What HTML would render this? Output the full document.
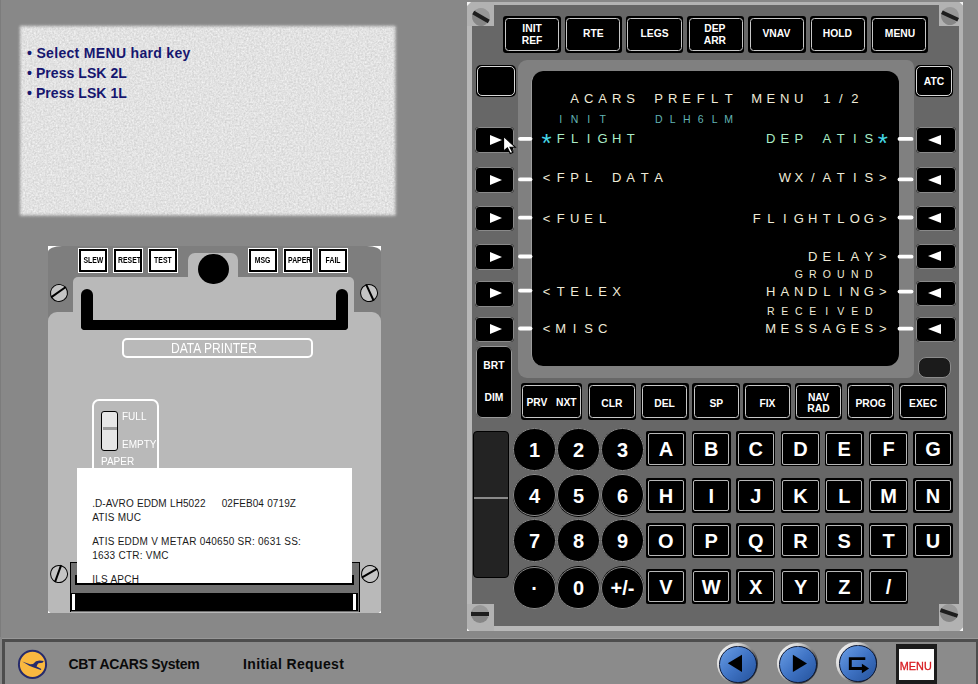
<!DOCTYPE html>
<html><head><meta charset="utf-8"><title>CBT ACARS System</title>
<style>
html,body{margin:0;padding:0}
body{width:978px;height:684px;overflow:hidden;background:#888;font-family:"Liberation Sans",Arial,sans-serif;position:relative}
#root{position:absolute;left:0;top:0;width:978px;height:684px;overflow:hidden;background:#888}
#root div,#root i,#root svg{position:absolute;box-sizing:border-box}
.panel{left:22px;top:28px;width:371.5px;height:185.5px}
.panel p{position:absolute;margin:0;left:5px;font-weight:bold;font-size:14px;color:#16166f;white-space:nowrap;letter-spacing:.32px}
/* CDU */
.cdu{left:467px;top:2px;width:496px;height:629px;background:#b4b4b4}
.cdu-in{left:472px;top:5px;width:487px;height:621px;background:#676767}
.corner{width:27px;height:24px;background:#b2b2b2}
.screw{width:18px;height:18px;border-radius:50%;background:linear-gradient(200deg,#989898 50%,#868686 50%)}
.screw:after{content:"";position:absolute;left:0px;top:7.2px;width:18px;height:3.6px;background:#1e1e1e}
.bezel{left:518px;top:60px;width:395.8px;height:317.5px;background:#808080;border-radius:9px 7px 7px 9px}
.scr{left:530.7px;top:70.7px;width:368.8px;height:295px;background:#000;border-radius:12px;border-left:1px solid #9c9c9c}
.key{background:#000;border-radius:3px;color:#fff;font-weight:bold;font-size:10.3px;line-height:11.7px;text-align:center}
.key:before{content:"";position:absolute;left:1.6px;top:1.6px;right:1.6px;bottom:1.6px;border:1px solid #c8c8c8;border-radius:3.5px}
.key.dim:before{border-color:#9a9a9a;border-radius:6px;left:0;top:0;right:0;bottom:0}
.key.f span{margin-top:3px}
.key.sq{border-radius:5px}
.key.sq:before{left:1px;top:1px;right:1px;bottom:1px;border-radius:5px;border-color:#d8d8d8}
.key.sq span{margin-top:1px}
.key.t span{margin-top:-.4px}
.key span{position:absolute;left:0;right:0;top:50%;transform:translateY(-50%)}
.lsk{background:#000;border-radius:4px}
.lsk:before{content:"";position:absolute;left:0;top:0;right:0;bottom:0;border:.9px solid #8a8a8a;border-radius:4px}
.tr{left:14.6px;top:50%;margin-top:-5.2px;width:0;height:0;border-left:12.5px solid #fff;border-top:5.3px solid transparent;border-bottom:5.3px solid transparent}
.tl{left:11.9px;top:50%;margin-top:-5.2px;width:0;height:0;border-right:13.4px solid #fff;border-top:5.3px solid transparent;border-bottom:5.3px solid transparent}
.num{width:43px;height:43px;border-radius:50%;background:#000;color:#fff;font-weight:bold;font-size:20px;text-align:center;line-height:44px}
.num:before{content:"";position:absolute;left:.3px;top:.3px;right:.3px;bottom:.3px;border:.9px solid #8a8a8a;border-radius:50%}
.num span{position:relative}
.let{width:39.4px;height:34.8px;background:#000;color:#fff;font-weight:bold;font-size:20px;text-align:center;line-height:37.3px;border-radius:2px}
.let:before{content:"";position:absolute;left:1.5px;top:1.5px;right:1.5px;bottom:1.5px;border:1px solid #b8b8b8;border-radius:2px}
.let span{position:relative}
/* printer */
.prn{left:48px;top:246px;width:333px;height:367px;background:#fff}
.prn-d{left:0;top:0;width:333px;height:367px;background:#7e7e7e;border-radius:14px 14px 5px 5px/6px 6px 4px 4px}
.lg{background:#b9b9b9}
.pb{width:30px;height:24.5px;background:#fff;border:1.5px solid #fff;color:#000;font-weight:bold;font-size:9.3px;line-height:23.5px;text-align:center}
.pb:before{content:"";position:absolute;left:0;top:0;right:0;bottom:0;border:2px solid #000}
.pb span{position:relative;display:inline-block;transform:scaleX(.74)}
.pscrew{width:18px;height:18px;border-radius:50%;border:1.9px solid #000;background:#c4c4c4}
.pscrew:after{content:"";position:absolute;left:-1.5px;top:5.7px;width:18px;height:2.8px;background:#000}
/* bar */
.bar{left:2px;top:638.5px;width:977px;height:60px;border:3.2px solid #4d4d4d;background:#8b8b8b}
.bt{font-weight:bold;font-size:14px;line-height:16px;color:#0a0a0a;white-space:nowrap;top:655.6px}
.nav{width:41px;height:41px;border-radius:50%;top:643px;background:linear-gradient(125deg,#f4f4f4 10%,#cfcfcf 35%,#8a8a8a 55%,#3a3a3a 78%,#2a2a2a 100%)}
.nav:before{content:"";position:absolute;left:2.8px;top:2.8px;width:35.4px;height:35.4px;border-radius:50%;border:1px solid #0b1836;background:linear-gradient(135deg,#6296df 10%,#3f73c4 50%,#27559f 95%)}
.gl{color:#fff;font-size:11.5px;line-height:12.6px;white-space:nowrap;transform:scaleX(.87);transform-origin:0 0}
.paper p{position:absolute;margin:0;left:15.2px;font-size:10px;line-height:11px;color:#1a1a1a;white-space:nowrap;letter-spacing:.25px}
</style></head><body><div id="root">

<svg style="left:8px;top:14px" width="400" height="214" viewBox="8 14 400 214">
<filter id="tx" x="-5%" y="-8%" width="110%" height="116%" color-interpolation-filters="sRGB">
<feGaussianBlur in="SourceAlpha" stdDeviation="1.7" result="m"/>
<feTurbulence type="fractalNoise" baseFrequency="0.55" numOctaves="2" seed="4" result="n"/>
<feColorMatrix in="n" type="matrix" values="0.2 0 0 0 0.785  0.2 0 0 0 0.785  0.2 0 0 0 0.785  0 0 0 0 1" result="g"/>
<feComposite in="g" in2="m" operator="in"/>
</filter>
<rect x="20" y="26" width="375.5" height="189.5" fill="#e1e1e1" filter="url(#tx)"/>
</svg>
<div style="left:0;top:0;width:1px;height:637px;background:#7c7c7c"></div>
<div class="panel">
<p style="top:17px">• Select MENU hard key</p>
<p style="top:37px;letter-spacing:.06px">• Press LSK 2L</p>
<p style="top:57px;letter-spacing:.06px">• Press LSK 1L</p>
</div>

<!-- printer -->
<div class="prn"><div class="prn-d"></div>
<div class="lg" style="left:25px;top:31px;width:281px;height:40px;border-radius:5px 5px 0 0"></div>
<div class="lg" style="left:0;top:66px;width:333px;height:301px;border-radius:9px 9px 4px 4px"></div>
<div class="lg" style="left:140px;top:6.5px;width:50px;height:30px;border-radius:7px 7px 0 0"></div>
<div style="left:150px;top:7.5px;width:30.6px;height:30.6px;border-radius:50%;background:#000"></div>
<div class="pb" style="left:30px;top:2.4px"><span>SLEW</span></div>
<div class="pb" style="left:65px;top:2.4px"><span>RESET</span></div>
<div class="pb" style="left:100px;top:2.4px"><span>TEST</span></div>
<div class="pb" style="left:200px;top:2.4px"><span>MSG</span></div>
<div class="pb" style="left:235px;top:2.4px"><span>PAPER</span></div>
<div class="pb" style="left:270px;top:2.4px"><span>FAIL</span></div>
<div class="pscrew" style="left:2px;top:38.3px;transform:rotate(-35deg)"></div>
<div class="pscrew" style="left:312.3px;top:38.3px;transform:rotate(65deg)"></div>
<div class="pscrew" style="left:2px;top:319.2px;transform:rotate(-70deg)"></div>
<div class="pscrew" style="left:313px;top:319.2px;transform:rotate(-30deg)"></div>
<!-- handle -->
<div style="left:33px;top:49px;width:267px;height:34.6px;border:12.2px solid #000;border-bottom-width:10.7px;border-top:none;border-radius:0 0 4px 4px"></div>
<div style="left:33px;top:43.2px;width:12.2px;height:12px;background:#000;border-radius:6px 6px 0 0"></div>
<div style="left:287.8px;top:43.2px;width:12.2px;height:12px;background:#000;border-radius:6px 6px 0 0"></div>
<div style="left:74px;top:92.4px;width:191px;height:20px;border:2px solid #fff;border-radius:5px;color:#fff;font-size:14px;line-height:16px;text-align:center"><span style="display:inline-block;transform:scaleX(.86);position:relative;left:-3.5px">DATA PRINTER</span></div>
<!-- paper gauge -->
<div style="left:44.2px;top:152.6px;width:67px;height:80px;border:2px solid #fff;border-radius:7px"></div>
<div style="left:53px;top:165px;width:17.2px;height:39.5px;border:1.3px solid #000;border-right-width:1.9px;border-bottom-width:1.9px;border-radius:3px;background:#e6e6e6"></div>
<div style="left:54.5px;top:180.8px;width:14.5px;height:2.8px;background:#9c9c9c"></div>
<div class="gl" style="left:73.5px;top:164px">FULL</div>
<div class="gl" style="left:73.5px;top:192.3px">EMPTY</div>
<div class="gl" style="left:53px;top:209px">PAPER</div>
<!-- slot -->
<div style="left:21.5px;top:316px;width:290px;height:50px;background:#707070;border:1.4px solid #000;border-bottom:none"></div>
<div style="left:23px;top:347px;width:287px;height:18.4px;background:#000"></div>
<div style="left:24.2px;top:348px;width:2.8px;height:16px;background:#fff"></div>
<div style="left:305.2px;top:348px;width:2.8px;height:16px;background:#fff"></div>
<div style="left:27px;top:329px;width:279px;height:10px;border:2px solid #000;border-top:none"></div>
<div class="paper" style="left:29px;top:222px;width:275px;height:115px;background:#fff;overflow:hidden">
<p style="top:30.3px;letter-spacing:.09px;word-spacing:.35px">.D-AVRO EDDM LH5022&nbsp; &nbsp; &nbsp;02FEB04 0719Z</p>
<p style="top:43.9px">ATIS MUC</p>
<p style="top:67.7px">ATIS EDDM V METAR 040650 SR: 0631 SS:</p>
<p style="top:81.7px">1633 CTR: VMC</p>
<p style="top:105.8px">ILS APCH</p>
</div>
</div>

<!-- CDU -->
<div class="cdu"></div>
<div style="left:467px;top:2px;width:5px;height:629px;background:#b8b8b8"></div>
<div style="left:959px;top:2px;width:4px;height:629px;background:#b2b2b2"></div>
<div style="left:467px;top:626px;width:496px;height:5px;background:#b8b8b8"></div>
<div class="cdu-in"></div>
<div class="corner" style="left:467px;top:2px"></div><div class="screw" style="left:472px;top:7.5px;transform:rotate(30deg)"></div>
<div class="corner" style="left:938.5px;top:2px;width:24.5px"></div><div class="screw" style="left:941px;top:7px;transform:rotate(25deg)"></div>
<div class="corner" style="left:467px;top:603.5px;height:27.5px"></div><div class="screw" style="left:471px;top:605px"></div>
<div class="corner" style="left:938.5px;top:603.5px;width:24.5px;height:27.5px"></div><div class="screw" style="left:940px;top:604.2px;transform:rotate(18deg)"></div>
<svg style="left:466px;top:1px" width="498" height="631" viewBox="466 1 498 631"><path d="M467 2h4l-4 4z M963 2h-3.5l3.5 3.5z M963 631v-3.5l-3.5 3.5z M467 631v-2.500l2.500 2.500z" fill="#f4f4f4"/></svg>
<div class="bezel"></div>
<div class="scr"></div>
<svg style="left:0;top:0;white-space:pre" width="978" height="400" viewBox="0 0 978 400" font-family="Liberation Sans, Arial, sans-serif" text-anchor="middle">
<g stroke="#fff" stroke-width="3.8" stroke-linecap="round"><line x1="520" y1="138.8" x2="530.5" y2="138.8"/><line x1="520" y1="179.4" x2="530.5" y2="179.4"/><line x1="520" y1="217.7" x2="530.5" y2="217.7"/><line x1="520" y1="256.5" x2="530.5" y2="256.5"/><line x1="520" y1="290.6" x2="530.5" y2="290.6"/><line x1="520" y1="328.5" x2="530.5" y2="328.5"/><line x1="899.5" y1="138.9" x2="911.5" y2="138.9"/><line x1="899.5" y1="179.4" x2="911.5" y2="179.4"/><line x1="899.5" y1="217.5" x2="911.5" y2="217.5"/><line x1="899.5" y1="256.7" x2="911.5" y2="256.7"/><line x1="899.5" y1="291.6" x2="911.5" y2="291.6"/><line x1="899.5" y1="328.7" x2="911.5" y2="328.7"/></g>
<text x="574.62 588.63 602.64 616.65 630.66" y="102.7" font-size="13" fill="#efebd8">ACARS</text>
<text x="658.68 672.69 686.7 700.71 714.72 728.73" y="102.7" font-size="13" fill="#efebd8">PREFLT</text>
<text x="756.75 770.76 784.77 798.78" y="102.7" font-size="13" fill="#efebd8">MENU</text>
<text x="826.8 840.81 854.82" y="102.7" font-size="13" fill="#efebd8">1/2</text>
<text x="560.61 574.62 588.63 602.64" y="122.8" font-size="10.5" fill="#62b4b4">INIT</text>
<text x="658.68 672.69 686.7 700.71 714.72 728.73" y="122.8" font-size="10.5" fill="#62b4b4">DLH6LM</text>
<text x="546.6" y="152" font-size="26" fill="#45d6e6">*</text>
<text x="560.61 574.62 588.63 602.64 616.65 630.66" y="142.7" font-size="13" fill="#aaecc6">FLIGHT</text>
<text x="770.76 784.77 798.78" y="142.7" font-size="13" fill="#aaecc6">DEP</text>
<text x="826.8 840.81 854.82 868.83" y="142.7" font-size="13" fill="#aaecc6">ATIS</text>
<text x="882.84" y="152" font-size="26" fill="#45d6e6">*</text>
<text x="546.6 560.61 574.62 588.63" y="182.4" font-size="13" fill="#efebd8">&lt;FPL</text>
<text x="616.65 630.66 644.67 658.68" y="182.4" font-size="13" fill="#efebd8">DATA</text>
<text x="784.77 798.78 812.79 826.8 840.81 854.82 868.83 882.84" y="182.4" font-size="13" fill="#efebd8">WX/ATIS&gt;</text>
<text x="546.6 560.61 574.62 588.63 602.64" y="222.5" font-size="13" fill="#efebd8">&lt;FUEL</text>
<text x="756.75 770.76 784.77 798.78 812.79 826.8 840.81 854.82 868.83 882.84" y="222.5" font-size="13" fill="#efebd8">FLIGHTLOG&gt;</text>
<text x="812.79 826.8 840.81 854.82 868.83 882.84" y="260.7" font-size="13" fill="#efebd8">DELAY&gt;</text>
<text x="798.78 812.79 826.8 840.81 854.82 868.83" y="278.3" font-size="10.5" fill="#efebd8">GROUND</text>
<text x="546.6 560.61 574.62 588.63 602.64 616.65" y="296.3" font-size="13" fill="#efebd8">&lt;TELEX</text>
<text x="770.76 784.77 798.78 812.79 826.8 840.81 854.82 868.83 882.84" y="296.3" font-size="13" fill="#efebd8">HANDLING&gt;</text>
<text x="770.76 784.77 798.78 812.79 826.8 840.81 854.82 868.83" y="314.7" font-size="10.5" fill="#efebd8">RECEIVED</text>
<text x="546.6 560.61 574.62 588.63 602.64" y="333.2" font-size="13" fill="#efebd8">&lt;MISC</text>
<text x="770.76 784.77 798.78 812.79 826.8 840.81 854.82 868.83 882.84" y="333.2" font-size="13" fill="#efebd8">MESSAGES&gt;</text>
</svg>
<div class="key t" style="left:503.4px;top:16px;width:57.4px;height:36.8px"><span style="margin-left:0px;margin-top:0.6px">INIT<br>REF</span></div>
<div class="key t" style="left:564.6px;top:16px;width:57.4px;height:36.8px"><span style="margin-left:0px;margin-top:-0.4px">RTE</span></div>
<div class="key t" style="left:625.8px;top:16px;width:57.4px;height:36.8px"><span style="margin-left:0px;margin-top:-0.4px">LEGS</span></div>
<div class="key t" style="left:687.1px;top:16px;width:57.4px;height:36.8px"><span style="margin-left:-1.8px;margin-top:0.6px">DEP<br>ARR</span></div>
<div class="key t" style="left:748.3px;top:16px;width:57.4px;height:36.8px"><span style="margin-left:-1.2px;margin-top:-0.4px">VNAV</span></div>
<div class="key t" style="left:809.5px;top:16px;width:57.4px;height:36.8px"><span style="margin-left:-1.5px;margin-top:-0.4px">HOLD</span></div>
<div class="key t" style="left:870.7px;top:16px;width:57.4px;height:36.8px"><span style="margin-left:1.3px;margin-top:-0.4px">MENU</span></div>
<div class="key f" style="left:520.6px;top:383px;width:61.8px;height:36.5px"><span style="margin-top:2px">PRV&nbsp;&nbsp; NXT</span></div>
<div class="key f" style="left:587.6px;top:383px;width:48.7px;height:36.5px"><span>CLR</span></div>
<div class="key f" style="left:640.5px;top:383px;width:48.2px;height:36.5px"><span>DEL</span></div>
<div class="key f" style="left:692.3px;top:383px;width:48.0px;height:36.5px"><span>SP</span></div>
<div class="key f" style="left:743.4px;top:383px;width:48.0px;height:36.5px"><span>FIX</span></div>
<div class="key f" style="left:794.6px;top:383px;width:47.7px;height:36.5px"><span style="margin-top:2.4px">NAV<br>RAD</span></div>
<div class="key f" style="left:846.7px;top:383px;width:47.8px;height:36.5px"><span>PROG</span></div>
<div class="key f" style="left:898.9px;top:383px;width:48.5px;height:36.5px"><span>EXEC</span></div>

<div class="key sq" style="left:476.4px;top:65.2px;width:39.3px;height:31.4px"></div>
<div class="key sq" style="left:914.7px;top:65.2px;width:38.7px;height:31.4px"><span>ATC</span></div>
<div class="lsk" style="left:475px;top:127px;width:39.3px;height:25.7px"><i class="tr"></i></div>
<div class="lsk" style="left:475px;top:167.3px;width:39.3px;height:25.7px"><i class="tr"></i></div>
<div class="lsk" style="left:475px;top:206px;width:39.3px;height:25.3px"><i class="tr"></i></div>
<div class="lsk" style="left:475px;top:243.6px;width:39.3px;height:26.4px"><i class="tr"></i></div>
<div class="lsk" style="left:475px;top:280.5px;width:39.3px;height:26.1px"><i class="tr"></i></div>
<div class="lsk" style="left:475px;top:316.5px;width:39.3px;height:25.5px"><i class="tr"></i></div>
<div class="lsk" style="left:915.8px;top:127px;width:40px;height:25.7px"><i class="tl"></i></div>
<div class="lsk" style="left:915.8px;top:167.3px;width:40px;height:25.7px"><i class="tl"></i></div>
<div class="lsk" style="left:915.8px;top:205.6px;width:40px;height:25.4px"><i class="tl"></i></div>
<div class="lsk" style="left:915.8px;top:243.9px;width:40px;height:25.4px"><i class="tl"></i></div>
<div class="lsk" style="left:915.8px;top:281px;width:40px;height:24.7px"><i class="tl"></i></div>
<div class="lsk" style="left:915.8px;top:316.5px;width:40px;height:25.2px"><i class="tl"></i></div>

<div class="key dim" style="left:476px;top:346px;width:35.8px;height:72.3px;border-radius:6px"><span style="top:19.8px">BRT</span><span style="top:52.3px">DIM</span></div>
<div style="left:918.3px;top:356.8px;width:32.8px;height:21.3px;background:#1b1b1b;border:1.2px solid #8c8c8c;border-radius:8px"></div>
<div style="left:473px;top:431.3px;width:35.8px;height:146.4px;background:#232323;border:1.3px solid #000;border-radius:4px"></div>
<div style="left:474px;top:497.2px;width:33.8px;height:1.4px;background:#8a8a8a"></div>
<div class="num" style="left:513.0px;top:428.0px"><span>1</span></div>
<div class="num" style="left:557.0px;top:428.0px"><span>2</span></div>
<div class="num" style="left:601.0px;top:428.0px"><span>3</span></div>
<div class="num" style="left:513.0px;top:473.7px"><span>4</span></div>
<div class="num" style="left:557.0px;top:473.7px"><span>5</span></div>
<div class="num" style="left:601.0px;top:473.7px"><span>6</span></div>
<div class="num" style="left:513.0px;top:519.1px"><span>7</span></div>
<div class="num" style="left:557.0px;top:519.1px"><span>8</span></div>
<div class="num" style="left:601.0px;top:519.1px"><span>9</span></div>
<div class="num" style="left:513.0px;top:566.3px"><span>·</span></div>
<div class="num" style="left:557.0px;top:566.3px"><span>0</span></div>
<div class="num" style="left:601.0px;top:566.3px"><span>+/-</span></div>
<div class="let" style="left:646.2px;top:431.3px"><span>A</span></div>
<div class="let" style="left:691.5px;top:431.3px"><span>B</span></div>
<div class="let" style="left:736.1px;top:431.3px"><span>C</span></div>
<div class="let" style="left:780.9px;top:431.3px"><span>D</span></div>
<div class="let" style="left:824.6px;top:431.3px"><span>E</span></div>
<div class="let" style="left:868.9px;top:431.3px"><span>F</span></div>
<div class="let" style="left:913.4px;top:431.3px"><span>G</span></div>
<div class="let" style="left:646.2px;top:478px"><span>H</span></div>
<div class="let" style="left:691.5px;top:478px"><span>I</span></div>
<div class="let" style="left:736.1px;top:478px"><span>J</span></div>
<div class="let" style="left:780.9px;top:478px"><span>K</span></div>
<div class="let" style="left:824.6px;top:478px"><span>L</span></div>
<div class="let" style="left:868.9px;top:478px"><span>M</span></div>
<div class="let" style="left:913.4px;top:478px"><span>N</span></div>
<div class="let" style="left:646.2px;top:523px"><span>O</span></div>
<div class="let" style="left:691.5px;top:523px"><span>P</span></div>
<div class="let" style="left:736.1px;top:523px"><span>Q</span></div>
<div class="let" style="left:780.9px;top:523px"><span>R</span></div>
<div class="let" style="left:824.6px;top:523px"><span>S</span></div>
<div class="let" style="left:868.9px;top:523px"><span>T</span></div>
<div class="let" style="left:913.4px;top:523px"><span>U</span></div>
<div class="let" style="left:646.2px;top:569px"><span>V</span></div>
<div class="let" style="left:691.5px;top:569px"><span>W</span></div>
<div class="let" style="left:736.1px;top:569px"><span>X</span></div>
<div class="let" style="left:780.9px;top:569px"><span>Y</span></div>
<div class="let" style="left:824.6px;top:569px"><span>Z</span></div>
<div class="let" style="left:868.9px;top:569px"><span>/</span></div>


<!-- bottom bar -->
<div style="left:2px;top:637.6px;width:976px;height:1.2px;background:#989898"></div>
<div class="bar"></div>
<svg style="left:17px;top:648.5px" width="31" height="31" viewBox="0 0 31 31"><circle cx="15.5" cy="15.4" r="13.6" fill="#f9b840" stroke="#262b6c" stroke-width="2"/>
<path d="M5.2 12.5 L13 15.2 Q16.5 15.6 19 12.2 L22.5 11.6 L26.8 12 L25.5 13.7 L21.5 14.3 Q20 15.6 19.6 17.6 L24.4 20 L23.8 20.9 L16 18.2 Q12 17 9 14.8 Z" fill="#262b6c"/></svg>
<div class="bt" style="left:68.5px;letter-spacing:-.3px">CBT ACARS System</div>
<div class="bt" style="left:243px;letter-spacing:.37px">Initial Request</div>
<div class="nav" style="left:716.5px"></div>
<div class="nav" style="left:776.5px"></div>
<div class="nav" style="left:836.4px;top:642.3px"></div>
<svg style="left:700px;top:640px" width="200" height="44" viewBox="700 640 200 44">
<path d="M727.8 663.3 L742 654.8 L742 672 Z" fill="#000"/>
<path d="M807 663.4 L792.9 654.8 L792.9 672 Z" fill="#000"/>
<path d="M865.3 658.6 H850.3 V668.5 H862.5" fill="none" stroke="#000" stroke-width="2.9"/>
<path d="M861.9 663.8 L869.1 668.5 L861.9 673.3 Z" fill="#000"/>
</svg>
<div style="left:896px;top:644.2px;width:41px;height:45px;background:#1c1c1c"></div>
<div style="left:899px;top:649px;width:35px;height:30.5px;background:#fff;color:#d81c22;font-weight:normal;-webkit-text-stroke:.35px #d81c22;font-size:11.4px;line-height:34.4px;text-align:center"><span style="display:inline-block;transform:scaleX(.95);margin-left:-2px">MENU</span></div>

<!-- cursor -->
<svg style="left:501.7px;top:135.2px" width="16.6" height="21.6" viewBox="-1 -1 16 24" preserveAspectRatio="none"><path d="M0.5 0.5 L0.5 17 L4.2 13.4 L7 19.6 L9.4 18.5 L6.7 12.6 L11.8 12.6 Z" fill="#fff" stroke="#000" stroke-width="1.1" stroke-linejoin="miter"/></svg>
</div></body></html>
